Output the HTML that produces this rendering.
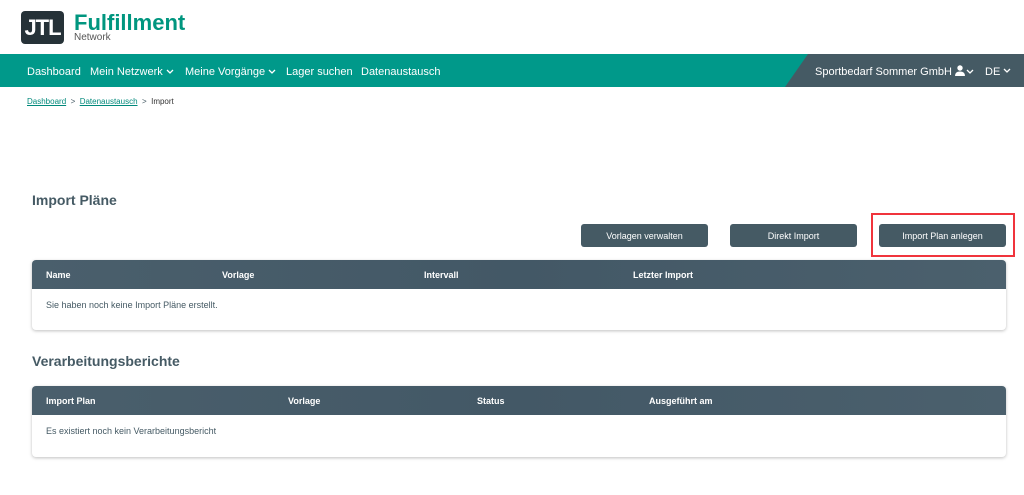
<!DOCTYPE html>
<html><head><meta charset="utf-8"><style>
*{margin:0;padding:0;box-sizing:border-box}
body{width:1024px;height:495px;background:#fff;font-family:"Liberation Sans",Arial,sans-serif;position:relative;overflow:hidden;color:#455a64}
.abs{position:absolute}
.logo{left:21px;top:11px;width:43px;height:33px;background:#263238;border-radius:4px;color:#fff;font-weight:bold;font-size:22px;text-align:center;line-height:33px;letter-spacing:-1px;font-family:"Liberation Sans Narrow","Liberation Sans",sans-serif}
.ful{left:74px;top:10px;font-size:22px;font-weight:bold;color:#00967f}
.net{left:74px;top:32px;font-size:10px;color:#555}
.nav{left:0;top:54px;width:1024px;height:33px;background:#00998a}
.dark{left:785px;top:54px;width:239px;height:33px;background:#455a64;clip-path:polygon(23px 0,100% 0,100% 100%,0 100%)}
.nav span{position:absolute;top:12px;font-size:11px;color:#fff;white-space:nowrap}
.nav svg{vertical-align:middle;margin-left:3px}
.bc{top:97px;font-size:8px}
.bc a{color:#00897b;text-decoration:underline}
h2{position:absolute;font-size:14px;font-weight:bold;color:#455a64}
.btn{top:224px;width:127px;height:23px;background:#455a64;border-radius:3px;color:#fff;font-size:9px;text-align:center;line-height:25px}
.tbl{left:32px;width:974px;border-radius:4px;box-shadow:0 1px 3px rgba(0,0,0,.25);background:#fff}
.th{height:29px;background:linear-gradient(90deg,#4a5f6c,#435866 50%,#4b606d);border-radius:4px 4px 0 0;position:relative}
.th span{position:absolute;top:10px;font-size:9px;font-weight:bold;color:#fff}
.tb{font-size:9px;padding:11px 14px;color:#455a64}
</style></head><body>
<div class="abs logo">JTL</div>
<div class="abs ful">Fulfillment</div>
<div class="abs net">Network</div>
<div class="abs nav">
<span style="left:27px">Dashboard</span>
<span style="left:90px">Mein Netzwerk<svg width="8" height="6"><path d="M1 1l3 3 3-3" stroke="#fff" stroke-width="1.3" fill="none"/></svg></span>
<span style="left:185px">Meine Vorgänge<svg width="8" height="6"><path d="M1 1l3 3 3-3" stroke="#fff" stroke-width="1.3" fill="none"/></svg></span>
<span style="left:286px">Lager suchen</span>
<span style="left:361px">Datenaustausch</span>
</div>
<div class="abs dark"></div>
<div class="abs" style="left:815px;top:66px;font-size:11px;color:#fff">Sportbedarf Sommer GmbH</div>
<svg class="abs" style="left:955px;top:65px" width="22" height="12" viewBox="0 0 22 12"><circle cx="5" cy="3" r="2.7" fill="#fff"/><path d="M0 11 Q0 6.5 5 6.5 Q10 6.5 10 11Z" fill="#fff"/><path d="M12 5l3 3 3-3" stroke="#fff" stroke-width="1.3" fill="none"/></svg>
<div class="abs" style="left:985px;top:66px;font-size:11px;color:#fff">DE</div>
<svg class="abs" style="left:1003px;top:68px" width="8" height="6"><path d="M1 1l3 3 3-3" stroke="#fff" stroke-width="1.3" fill="none"/></svg>
<div class="abs bc" style="left:27px"><a>Dashboard</a> &nbsp;&gt;&nbsp; <a>Datenaustausch</a> &nbsp;&gt;&nbsp; <span style="color:#333">Import</span></div>
<h2 style="left:32px;top:192px">Import Pläne</h2>
<div class="abs btn" style="left:581px">Vorlagen verwalten</div>
<div class="abs btn" style="left:730px">Direkt Import</div>
<div class="abs btn" style="left:879px">Import Plan anlegen</div>
<div class="abs" style="left:871px;top:213px;width:144px;height:44px;border:2px solid #f0343c"></div>
<div class="abs tbl" style="top:260px;height:70px">
<div class="th"><span style="left:14px">Name</span><span style="left:190px">Vorlage</span><span style="left:392px">Intervall</span><span style="left:601px">Letzter Import</span></div>
<div class="tb">Sie haben noch keine Import Pläne erstellt.</div>
</div>
<h2 style="left:32px;top:353px">Verarbeitungsberichte</h2>
<div class="abs tbl" style="top:386px;height:71px">
<div class="th"><span style="left:14px">Import Plan</span><span style="left:256px">Vorlage</span><span style="left:445px">Status</span><span style="left:617px">Ausgeführt am</span></div>
<div class="tb">Es existiert noch kein Verarbeitungsbericht</div>
</div>
</body></html>
